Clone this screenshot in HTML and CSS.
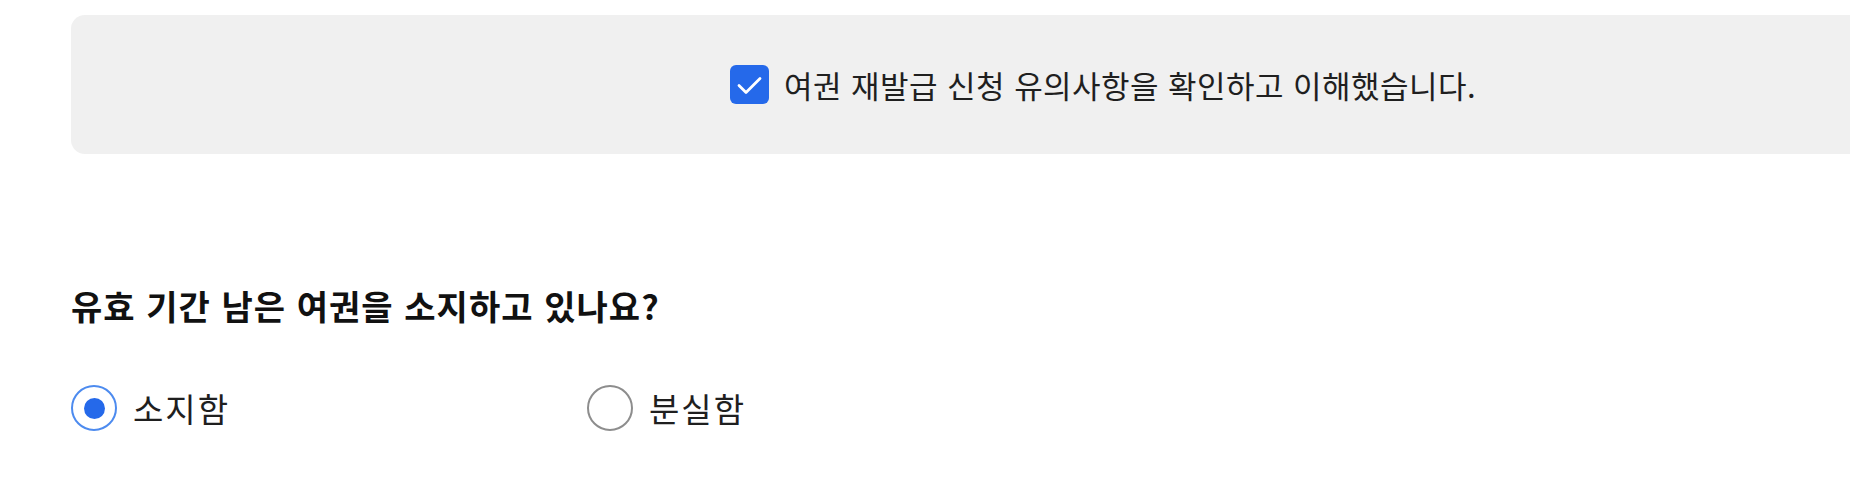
FILE: index.html
```html
<!DOCTYPE html>
<html lang="ko">
<head>
<meta charset="utf-8">
<title>여권 재발급</title>
<link rel="stylesheet" href="styles.css">
</head>
<body>
<main class="page">
  <section class="notice">
    <label class="agree">
      <span class="checkbox" role="checkbox" aria-checked="true">
        <svg viewBox="0 0 39 39" width="39" height="39" aria-hidden="true">
          <path d="M9 20.5 L16 27.5 L30 13.5" fill="none" stroke="#ffffff" stroke-width="2.8" stroke-linecap="round" stroke-linejoin="round"/>
        </svg>
      </span>
      <span class="agree-text">여권 재발급 신청 유의사항을 확인하고 이해했습니다.</span>
    </label>
  </section>

  <section class="question">
    <h2 class="question-title">유효 기간 남은 여권을 소지하고 있나요?</h2>
    <div class="options" role="radiogroup">
      <label class="option">
        <span class="radio is-checked" role="radio" aria-checked="true"></span>
        <span class="option-text">소지함</span>
      </label>
      <label class="option">
        <span class="radio" role="radio" aria-checked="false"></span>
        <span class="option-text">분실함</span>
      </label>
    </div>
  </section>
</main>
</body>
</html>
```

FILE: styles.css
```css
html, body {
  margin: 0;
  padding: 0;
  background: #ffffff;
  overflow: hidden;
}

body {
  font-family: "Noto Sans CJK KR", "Noto Sans", sans-serif;
  color: #1f1f1f;
}

.page {
  padding: 15px 0 0 71px;
}

.notice {
  width: 2064px;
  height: 139px;
  background: #f0f0f0;
  border-radius: 14px;
  display: flex;
  align-items: center;
  justify-content: center;
}

.agree {
  display: flex;
  align-items: center;
  gap: 15px;
}

.checkbox {
  width: 39px;
  height: 39px;
  border-radius: 6px;
  background: #2569ea;
  display: flex;
  flex: none;
}

.checkbox svg {
  display: block;
}

.agree-text {
  font-size: 31px;
  line-height: 40px;
  letter-spacing: 0.45px;
  color: #1f1f1f;
}

.question-title {
  margin: 131px 0 0 0;
  font-size: 34px;
  line-height: 42px;
  letter-spacing: 1.05px;
  font-weight: 700;
  color: #111111;
}

.options {
  margin-top: 58px;
  display: grid;
  grid-template-columns: 516px 516px;
}

.option {
  display: flex;
  align-items: center;
  gap: 16px;
}

.radio {
  box-sizing: border-box;
  width: 46px;
  height: 46px;
  border-radius: 50%;
  border: 2px solid #8d8d8d;
  display: flex;
  align-items: center;
  justify-content: center;
  flex: none;
}

.radio.is-checked {
  border-color: #4d8bef;
}

.radio.is-checked::after {
  content: "";
  width: 21px;
  height: 21px;
  border-radius: 50%;
  background: #2569ea;
}

.option-text {
  font-size: 33px;
  line-height: 40px;
  letter-spacing: 2px;
  color: #1f1f1f;
}
```
